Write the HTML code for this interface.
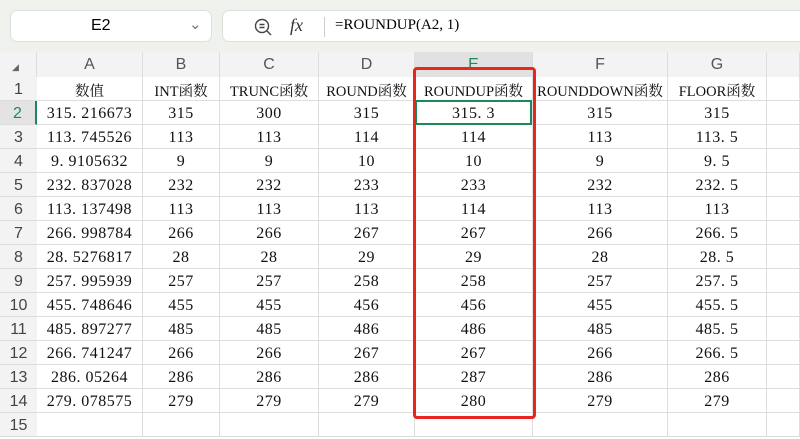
<!DOCTYPE html><html><head><style>
body{margin:0;width:800px;height:435px;overflow:hidden;background:#fff;font-family:"Liberation Sans",sans-serif;position:relative}
.top{position:absolute;left:0;top:0;width:800px;height:52px;background:#eef1ec}
.nb{position:absolute;left:10px;top:10px;width:202px;height:32px;background:#fff;border-radius:7px;border:1px solid #dde0da;box-sizing:border-box}
.fb{position:absolute;left:222px;top:10px;width:590px;height:32px;background:#fff;border-radius:7px;border:1px solid #dde0da;box-sizing:border-box}
.a{position:absolute;font-size:15px}
.hdr{position:absolute;top:52px;height:25px;background:#f3f3f3;border-right:1px solid #ddd;box-sizing:border-box;color:#555;font-size:16px;text-align:center;line-height:25px}
.rh{position:absolute;left:0;width:37px;height:24px;background:#f3f3f3;border-bottom:1px solid #ddd;box-sizing:border-box;color:#444;font-size:16px;text-align:center;line-height:26px}
.c{position:absolute;height:24px;border-right:1px solid #ddd;border-bottom:1px solid #ddd;box-sizing:border-box;text-align:center;font-family:"Liberation Serif","Noto Serif CJK SC",serif;font-size:16px;letter-spacing:0.5px;line-height:26px;color:#111;white-space:nowrap;overflow:hidden}
</style></head><body>
<div class="top"></div>
<div class="nb"><span class="a" style="left:80px;top:6px;font-size:16px">E2</span><span class="a" style="left:178px;top:4px;color:#777">⌄</span></div>
<div class="fb"><svg style="position:absolute;left:30px;top:6px" width="20" height="20" viewBox="0 0 20 20" fill="none" stroke="#444" stroke-width="1.4"><circle cx="9" cy="9" r="6.5"/><path d="M6.5 7.5h5M6.5 10.5h5M14 14l4 4"/></svg><span class="a" style="left:67px;top:4px;font-family:'Liberation Serif',serif;font-style:italic;font-size:18px;color:#333">fx</span><div style="position:absolute;left:101px;top:6px;width:1px;height:20px;background:#ccc"></div><span class="a" style="left:112px;top:6px;font-family:'Liberation Serif',serif;font-size:15px">=ROUNDUP(A2, 1)</span></div>
<div id="g"></div>
<div style="position:absolute;left:413px;top:67px;width:123px;height:352px;border:3px solid #e8261e;border-radius:4px;box-sizing:border-box"></div>
<script>
var ed=[37,143,220,319,415,533,668,767,800],L="ABCDEFG ",h='';
h+='<div class="hdr" style="left:0;width:37px"><span style="font-size:9px;position:absolute;left:12px;top:3px;color:#666">◢</span></div>';
for(var i=0;i<8;i++){var s=i==4?'background:#e1e1e1;color:#1a8a5a;':'';h+='<div class="hdr" style="left:'+ed[i]+'px;width:'+(ed[i+1]-ed[i])+'px;'+s+'">'+L[i]+'</div>';}
var d=[["数值","INT函数","TRUNC函数","ROUND函数","ROUNDUP函数","ROUNDDOWN函数","FLOOR函数"],
["315.216673",315,300,315,"315.3",315,315],["113.745526",113,113,114,114,113,"113.5"],["9.9105632",9,9,10,10,9,"9.5"],["232.837028",232,232,233,233,232,"232.5"],["113.137498",113,113,113,114,113,113],["266.998784",266,266,267,267,266,"266.5"],["28.5276817",28,28,29,29,28,"28.5"],["257.995939",257,257,258,258,257,"257.5"],["455.748646",455,455,456,456,455,"455.5"],["485.897277",485,485,486,486,485,"485.5"],["266.741247",266,266,267,267,266,"266.5"],["286.05264",286,286,286,287,286,286],["279.078575",279,279,279,280,279,279],["","","","","","",""]];
for(var r=0;r<15;r++){var y=77+24*r;var rs=r==1?'background:#e3e3e3;color:#1a8a5a;border-right:2px solid #1a8a5a;':'';
h+='<div class="rh" style="top:'+y+'px;'+rs+'">'+(r+1)+'</div>';
for(var i=0;i<8;i++){var t=i<7?d[r][i]:'';t=String(t).replace('.','. ');h+='<div class="c" style="left:'+ed[i]+'px;top:'+y+'px;width:'+(ed[i+1]-ed[i])+'px;'+(r==0?'font-size:14.5px;letter-spacing:0;line-height:30px;':'')+'">'+t+'</div>';}}
h+='<div style="position:absolute;left:415px;top:100px;width:117px;height:25px;border:2px solid #1a8a5a;box-sizing:border-box"></div>';
document.getElementById('g').innerHTML=h;
</script>
</body></html>
